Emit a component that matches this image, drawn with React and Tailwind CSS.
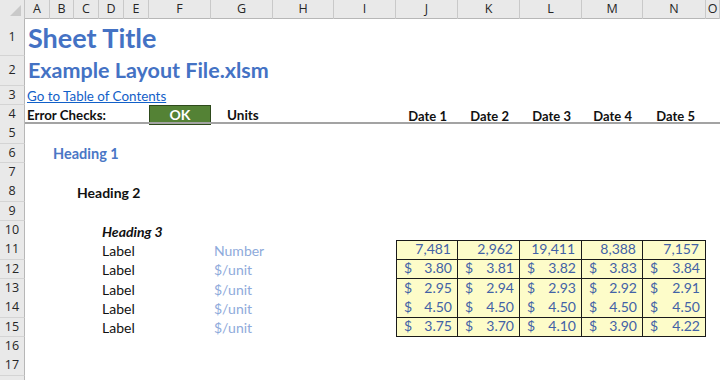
import React from "react";

const GRID =
  "grid grid-cols-[25px_25px_24px_25px_25px_25px_62px_62px_61px_62px_62px_62px_62px_61px_63px_1fr]";
const LETTERS = ["A", "B", "C", "D", "E", "F", "G", "H", "I", "J", "K", "L", "M", "N", "O"];

function HeaderRow() {
  return (
    <div className={`${GRID} h-[19px] bg-[#e9e9e9] border-b border-[#b7b7b7]`}>
      <div className="relative border-r border-[#c4c4c4] bg-[#e9e9e9]">
        <div className="absolute right-[3px] bottom-[3px] w-0 h-0 border-l-[11px] border-l-transparent border-b-[11px] border-b-[#c9c9c9]" />
      </div>
      {LETTERS.map((l) => (
        <div
          key={l}
          className="flex items-center justify-center border-r border-[#c9c9c9] text-[12.5px] text-[#262626] font-['Open_Sans',sans-serif]"
        >
          {l}
        </div>
      ))}
    </div>
  );
}

function Row({ n, h, cells = {} }) {
  return (
    <div className={GRID} style={{ height: h }}>
      <div className="flex items-center justify-center bg-[#e9e9e9] border-r border-[#b7b7b7] border-b border-b-[#d4d4d4] text-[12.5px] text-[#262626] font-['Open_Sans',sans-serif]">
        {n}
      </div>
      {LETTERS.map((l) => (
        <div key={l} className="relative min-w-0">
          {cells[l] || null}
        </div>
      ))}
    </div>
  );
}

const txt = "absolute whitespace-nowrap leading-none";

function Acc({ v, first }) {
  return (
    <div
      className={`absolute inset-0 bg-[#fdfcc9] border-r border-b border-[#1a1a1a] ${first ? "border-l" : ""} flex items-end justify-between leading-none pb-[3px] pl-[7px] pr-[5px] text-[14px] text-[#4262a6]`}
    >
      <span>$</span>
      <span>{v}</span>
    </div>
  );
}

function Num({ v, first }) {
  return (
    <div
      className={`absolute inset-0 bg-[#fdfcc9] border-r border-y border-[#1a1a1a] ${first ? "border-l" : ""} flex items-end justify-end leading-none pb-[3px] pr-[6px] text-[14px] text-[#4262a6]`}
    >
      <span>{v}</span>
    </div>
  );
}

const dataCols = ["J", "K", "L", "M", "N"];
const row11 = ["7,481", "2,962", "19,411", "8,388", "7,157"];
const accRows = [
  ["3.80", "3.81", "3.82", "3.83", "3.84"],
  ["2.95", "2.94", "2.93", "2.92", "2.91"],
  ["4.50", "4.50", "4.50", "4.50", "4.50"],
  ["3.75", "3.70", "4.10", "3.90", "4.22"],
];

function labelCells(unit) {
  return {
    D: <span className={`${txt} left-[3px] bottom-[2px] text-[14px] text-[#111]`}>Label</span>,
    G: <span className={`${txt} left-[3px] bottom-[2px] text-[14px] text-[#8eaadb]`}>{unit}</span>,
  };
}

export default function App() {
  const rh = 19.33;
  const c11 = labelCells("Number");
  dataCols.forEach((c, i) => (c11[c] = <Num v={row11[i]} first={i === 0} />));
  const accCells = accRows.map((vals) => {
    const o = labelCells("$/unit");
    dataCols.forEach((c, i) => (o[c] = <Acc v={vals[i]} first={i === 0} />));
    return o;
  });

  const date = (d) => (
    <span className={`${txt} right-[11px] bottom-[2px] text-[13px] font-bold text-[#111]`}>{d}</span>
  );

  return (
    <div className="w-[720px] h-[380px] overflow-hidden bg-white font-['Lato',sans-serif]">
      <HeaderRow />
      <Row
        n="1"
        h={37}
        cells={{
          A: (
            <span className={`${txt} left-[3px] bottom-[5px] text-[27px] font-bold text-[#4472c4]`}>
              Sheet Title
            </span>
          ),
        }}
      />
      <Row
        n="2"
        h={29.7}
        cells={{
          A: (
            <span className={`${txt} left-[3px] bottom-[4px] text-[21.5px] font-bold text-[#4472c4]`}>
              Example Layout File.xlsm
            </span>
          ),
        }}
      />
      <Row
        n="3"
        h={rh}
        cells={{
          A: (
            <span className={`${txt} left-[2px] bottom-[2px] text-[13.4px] text-[#1160c8] underline`}>
              Go to Table of Contents
            </span>
          ),
        }}
      />
      <Row
        n="4"
        h={rh}
        cells={{
          A: (
            <span className={`${txt} left-[2px] bottom-[2px] text-[13.3px] font-bold text-[#111]`}>
              Error Checks:
            </span>
          ),
          F: (
            <div className="absolute inset-0 bg-[#548235] border border-[#2e4a1c] flex items-center justify-center leading-none text-[14px] font-bold text-white">
              OK
            </div>
          ),
          G: <span className={`${txt} left-[16px] bottom-[2px] text-[13.5px] font-bold text-[#111]`}>Units</span>,
          J: date("Date 1"),
          K: date("Date 2"),
          L: date("Date 3"),
          M: date("Date 4"),
          N: date("Date 5"),
        }}
      />
      <div className="h-0 relative">
        <div className="absolute left-[25px] right-0 top-[-2px] h-[2px] bg-[#a3a3a3]" />
      </div>
      <Row n="5" h={rh} />
      <Row
        n="6"
        h={rh}
        cells={{
          B: (
            <span className={`${txt} left-[3px] bottom-[2px] text-[14.5px] font-bold text-[#4a77c6]`}>
              Heading 1
            </span>
          ),
        }}
      />
      <Row n="7" h={rh} />
      <Row
        n="8"
        h={rh}
        cells={{
          C: (
            <span className={`${txt} left-[3px] bottom-[2px] text-[14px] font-bold text-[#111]`}>Heading 2</span>
          ),
        }}
      />
      <Row n="9" h={rh} />
      <Row
        n="10"
        h={rh}
        cells={{
          D: (
            <span className={`${txt} left-[3px] bottom-[2px] text-[14px] font-bold italic text-[#111]`}>
              Heading 3
            </span>
          ),
        }}
      />
      <Row n="11" h={rh} cells={c11} />
      {accCells.map((cells, i) => (
        <Row key={i} n={String(12 + i)} h={rh} cells={cells} />
      ))}
      <Row n="16" h={rh} />
      <Row n="17" h={rh} />
      <Row n="" h={rh} />
    </div>
  );
}
